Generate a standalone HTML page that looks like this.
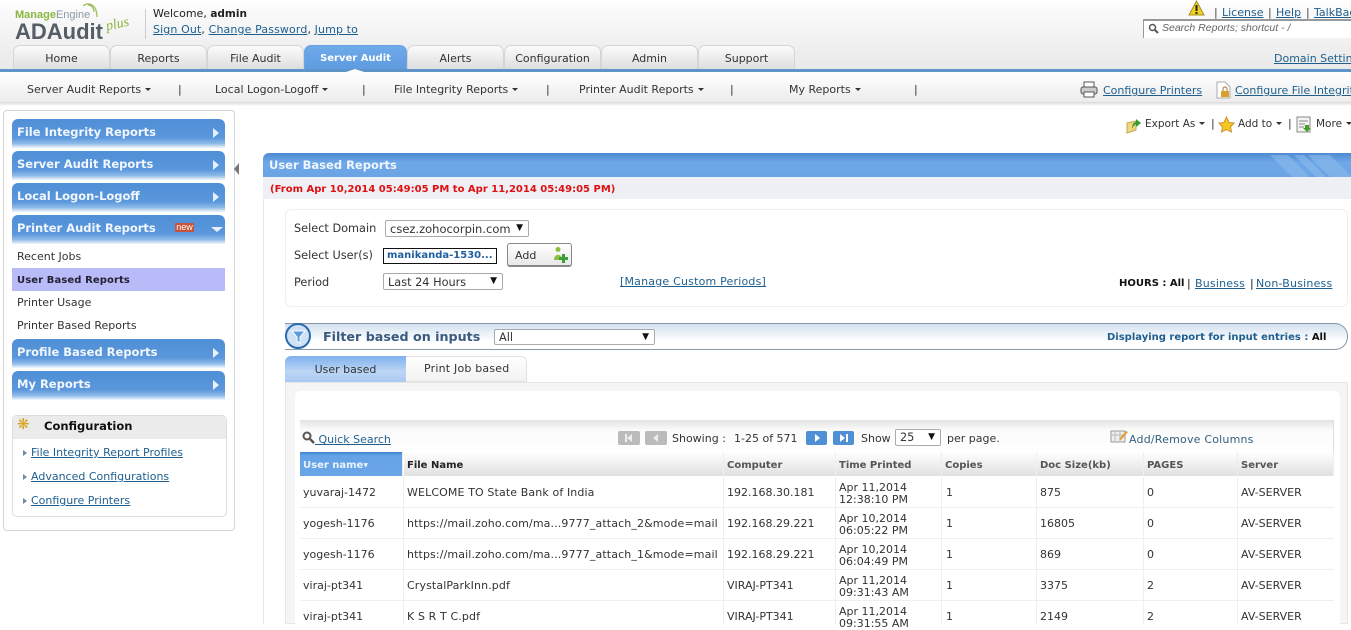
<!DOCTYPE html>
<html><head><meta charset="utf-8"><style>
html,body{margin:0;padding:0;width:1351px;height:624px;overflow:hidden;background:#fff;font-family:"DejaVu Sans",sans-serif;font-size:11px;color:#333}
.a,.t{position:absolute}
.t{white-space:nowrap;line-height:12px}
a{color:#1f5f8f;text-decoration:underline}
.tab{position:absolute;top:45px;height:24px;border:1px solid #d5d5d5;border-bottom:0;border-radius:7px 7px 0 0;box-sizing:border-box;background:linear-gradient(#fbfbfb,#dedede);text-align:center;line-height:25px;color:#333}
.nav{position:absolute;left:12px;width:213px;height:29px;border-radius:6px 6px 0 0;background:linear-gradient(#4f8fd6 0,#5b97dc 65%,#8fbbe9 85%,#f4f8fd 100%);color:#f2f7fd;font-weight:bold;font-size:11.5px;line-height:26px;text-indent:5px}
.nav i{position:absolute;left:201px;top:9px;width:0;height:0;border-left:6px solid #e8f1fb;border-top:5px solid transparent;border-bottom:5px solid transparent}
.sm{position:absolute;left:17px;color:#333}
.th{position:absolute;top:452px;height:24px;background:linear-gradient(#fff,#e0e0e0);font-weight:bold;font-size:10px;color:#555;line-height:28px;text-indent:3px;border-right:1px solid #eee;box-sizing:border-box}
.sep{position:absolute;top:477px;height:147px;width:1px;background:#edf0f3}
.h{position:absolute;left:300px;width:1034px;height:1px;background:#edf0f3}
.sel{position:absolute;border:1px solid #aaa;border-radius:2px;box-sizing:border-box;background:#fff;color:#333;font-size:11.3px;line-height:17px;padding-left:4px}
.sel b{position:absolute;right:5px;top:0;font-size:9px;line-height:15px;color:#111;font-weight:normal}
.btn{position:absolute;top:431px;width:22px;height:14px;border-radius:2px}
.car:after{content:"";display:inline-block;margin-left:4px;border-top:3px solid #333;border-left:3px solid transparent;border-right:3px solid transparent;vertical-align:2px}
.r{letter-spacing:.12px}
.bb{font-weight:bold;font-size:10px}
</style></head><body>
<!-- header -->
<div class="a" style="left:0;top:0;width:1351px;height:69px;background:linear-gradient(#fff,#fafafa 15%,#e9e9e9)"></div>
<div class="t" style="left:15px;top:8px;font:bold 11px/14px 'Liberation Sans',sans-serif;color:#8ab53f">Manage<span style="font-weight:normal;color:#8a9aa5">Engine</span></div>
<svg class="a" style="left:80px;top:1px" width="22" height="20"><path d="M3 5C9 0 17 4 17 16M8 4C12 4 14 8 14 11" fill="none" stroke="#9cc15c" stroke-width="1.3"/></svg>
<div class="t" style="left:15px;top:21px;font:bold 22px/22px 'Liberation Sans',sans-serif;color:#555e66">ADAudit</div>
<div class="t" style="left:106px;top:18px;font:italic 14px/14px 'Liberation Serif',serif;color:#8ab53f;transform:rotate(-12deg)">plus</div>
<div class="a" style="left:145px;top:9px;width:1px;height:30px;background:#ccc"></div>
<div class="t" style="left:153px;top:8px;color:#222">Welcome, <b style="font-size:10.500px">admin</b></div>
<div class="t r" style="left:153px;top:24px"><a>Sign Out</a>, <a>Change Password</a>, <a>Jump to</a></div>
<svg class="a" style="left:1188px;top:0" width="18" height="16"><path d="M8.500 1L16 15H1Z" fill="#f0d020" stroke="#a89020"/><rect x="7.500" y="5" width="2" height="6" fill="#222"/><rect x="7.500" y="12" width="2" height="2" fill="#222"/></svg>
<div class="t" style="left:1214px;top:7px;color:#444">|</div>
<div class="t" style="left:1222px;top:7px"><a>License</a></div>
<div class="t" style="left:1268px;top:7px;color:#444">|</div>
<div class="t" style="left:1276px;top:7px"><a>Help</a></div>
<div class="t" style="left:1306px;top:7px;color:#444">|</div>
<div class="t" style="left:1314px;top:7px"><a>TalkBack</a></div>
<div class="a" style="left:1143px;top:19px;width:208px;height:19px;background:#fff;border-top:2px solid #999;border-left:1px solid #999;box-sizing:border-box"></div>
<svg class="a" style="left:1148px;top:23px" width="11" height="11"><circle cx="4.500" cy="4.500" r="3" fill="none" stroke="#555" stroke-width="1.500"/><path d="M7 7l3 3" stroke="#555" stroke-width="2"/></svg>
<div class="t" style="left:1162px;top:22px;font:italic 10.500px/12px 'Liberation Sans',sans-serif;color:#666">Search Reports; shortcut - /</div>
<div class="t" style="left:1274px;top:53px"><a>Domain Settings</a></div>
<!-- tabs -->
<div class="tab" style="left:13px;width:97px">Home</div>
<div class="tab" style="left:110px;width:97px">Reports</div>
<div class="tab" style="left:207px;width:97px">File Audit</div>
<div class="tab" style="left:304px;width:103px;background:linear-gradient(#6faaea,#5e9be0);border-color:#6ba3e3;color:#fff;font-weight:bold;font-size:10px;line-height:26px">Server Audit</div>
<div class="tab" style="left:407px;width:97px">Alerts</div>
<div class="tab" style="left:504px;width:97px">Configuration</div>
<div class="tab" style="left:601px;width:97px">Admin</div>
<div class="tab" style="left:698px;width:97px">Support</div>
<div class="a" style="left:0;top:69px;width:1351px;height:3px;background:#5f94c8"></div>
<div class="a" style="left:346px;top:69px;border-bottom:3px solid #fff;border-left:9px solid transparent;border-right:9px solid transparent"></div>
<!-- subnav -->
<div class="a" style="left:0;top:72px;width:1351px;height:30px;background:linear-gradient(#fff,#ececec)"></div>
<div class="a" style="left:0;top:102px;width:1351px;height:4px;background:linear-gradient(#d8d8d8,#fff)"></div>
<div class="t car" style="left:27px;top:84px">Server Audit Reports</div>
<div class="t" style="left:178px;top:84px">|</div>
<div class="t car" style="left:215px;top:84px">Local Logon-Logoff</div>
<div class="t" style="left:362px;top:84px">|</div>
<div class="t car" style="left:394px;top:84px">File Integrity Reports</div>
<div class="t" style="left:546px;top:84px">|</div>
<div class="t car" style="left:579px;top:84px">Printer Audit Reports</div>
<div class="t" style="left:730px;top:84px">|</div>
<div class="t car" style="left:789px;top:84px">My Reports</div>
<div class="t" style="left:914px;top:84px">|</div>
<svg class="a" style="left:1080px;top:81px" width="18" height="18"><rect x="4" y="1" width="10" height="5" fill="#fff" stroke="#555"/><rect x="1" y="6" width="16" height="7" rx="2" fill="#ccc" stroke="#555"/><rect x="4" y="11" width="10" height="5" fill="#fff" stroke="#555"/></svg>
<div class="t" style="left:1103px;top:85px"><a>Configure Printers</a></div>
<svg class="a" style="left:1215px;top:81px" width="17" height="18"><path d="M2 1H10L15 6V17H2Z" fill="#fff" stroke="#aaa"/><rect x="6" y="10" width="8" height="6" fill="#d9a030"/><path d="M8 10V8a2 2 0 0 1 4 0v2" fill="none" stroke="#a07020"/></svg>
<div class="t" style="left:1235px;top:85px"><a>Configure File Integrity</a></div>
<!-- actions -->
<svg class="a" style="left:1126px;top:116px" width="16" height="18"><path d="M1 7L10 5V14L1 17Z" fill="#f0d880" stroke="#c0a850"/><path d="M6 13C6 8 8 6 10 6V3L15 7L10 11V8C8 9 7 11 6 13Z" fill="#3a9a2a"/></svg>
<div class="t car" style="left:1145px;top:118px;font-size:10.500px">Export As</div>
<div class="t" style="left:1211px;top:118px">|</div>
<svg class="a" style="left:1218px;top:116px" width="17" height="17"><path d="M8.500 1L11 6.500L16 7L12.500 11L13.500 16L8.500 13.500L3.500 16L4.500 11L1 7L6 6.500Z" fill="#f5c820" stroke="#d09030"/></svg>
<div class="t car" style="left:1238px;top:118px;font-size:10.500px">Add to</div>
<div class="t" style="left:1288px;top:118px">|</div>
<svg class="a" style="left:1296px;top:116px" width="16" height="18"><rect x="1" y="1" width="13" height="15" fill="#f4f4f0" stroke="#888"/><path d="M3 5h9M3 8h6M3 11h5" stroke="#888"/><path d="M9 9h4v3h2l-4 4-4-4h2z" fill="#4a9a30"/></svg>
<div class="t car" style="left:1316px;top:118px;font-size:10.500px">More</div>
<!-- sidebar -->
<div class="a" style="left:3px;top:110px;width:232px;height:421px;border:1px solid #d5d5d5;border-radius:4px;box-sizing:border-box"></div>
<div class="a" style="left:234px;top:163px;border-right:5px solid #777;border-top:6px solid transparent;border-bottom:6px solid transparent"></div>
<div class="nav" style="top:119px">File Integrity Reports<i></i></div>
<div class="nav" style="top:151px">Server Audit Reports<i></i></div>
<div class="nav" style="top:183px">Local Logon-Logoff<i></i></div>
<div class="nav" style="top:215px">Printer Audit Reports<i style="left:199px;top:12px;border-top:5px solid #e8f1fb;border-left:6px solid transparent;border-right:6px solid transparent;border-bottom:0"></i></div>
<div class="a" style="left:175px;top:223px;width:19px;height:9px;background:#c8523a;color:#fff;font:9px/8px 'Liberation Sans',sans-serif;text-align:center">new</div>
<div class="t sm" style="top:251px">Recent Jobs</div>
<div class="a" style="left:12px;top:268px;width:213px;height:23px;background:#b9bbf8"></div>
<div class="t sm bb" style="top:275px;color:#223;letter-spacing:.1px">User Based Reports</div>
<div class="t sm" style="top:297px">Printer Usage</div>
<div class="t sm" style="top:320px">Printer Based Reports</div>
<div class="nav" style="top:339px">Profile Based Reports<i></i></div>
<div class="nav" style="top:371px">My Reports<i></i></div>
<div class="a" style="left:12px;top:415px;width:215px;height:102px;border:1px solid #ddd;border-radius:5px;box-sizing:border-box"></div>
<div class="a" style="left:13px;top:416px;width:213px;height:23px;background:#ebebeb;border-radius:5px 5px 0 0"></div>
<div class="t" style="left:17px;top:418px;font-size:15px;color:#d8a020">&#10059;</div>
<div class="t" style="left:44px;top:420px;font-weight:bold;font-size:11.500px;color:#111">Configuration</div>
<div class="a" style="left:23px;top:450px;border-left:4px solid #6b8aa5;border-top:3px solid transparent;border-bottom:3px solid transparent"></div>
<div class="t" style="left:31px;top:447px"><a>File Integrity Report Profiles</a></div>
<div class="a" style="left:23px;top:474px;border-left:4px solid #6b8aa5;border-top:3px solid transparent;border-bottom:3px solid transparent"></div>
<div class="t" style="left:31px;top:471px"><a>Advanced Configurations</a></div>
<div class="a" style="left:23px;top:498px;border-left:4px solid #6b8aa5;border-top:3px solid transparent;border-bottom:3px solid transparent"></div>
<div class="t" style="left:31px;top:495px"><a>Configure Printers</a></div>
<!-- main header -->
<div class="a" style="left:263px;top:153px;width:1088px;height:24px;border-radius:6px 0 0 0;background:linear-gradient(#4d8ad0,#6fa8e8 40%,#6aa4e4)"></div>
<svg class="a" style="left:1270px;top:155px" width="81" height="22"><path d="M0 0H18L40 22H22ZM24 0H34L56 22H46ZM38 0H60L81 21V22H60Z" fill="#8fbcec" opacity=".55"/></svg>
<div class="t" style="left:269px;top:159px;color:#f0f6fd;font-weight:bold;font-size:11.500px">User Based Reports</div>
<div class="a" style="left:263px;top:177px;width:1088px;height:22px;background:#eef0f6"></div>
<div class="t bb" style="left:270px;top:184px;color:#e01010">(From Apr 10,2014 05:49:05 PM to Apr 11,2014 05:49:05 PM)</div>
<div class="a" style="left:263px;top:199px;width:1px;height:425px;background:#e4e6ea"></div>
<!-- form -->
<div class="a" style="left:285px;top:209px;width:1063px;height:98px;border:1px solid #eee;border-radius:6px;box-sizing:border-box"></div>
<div class="t" style="left:294px;top:223px;font-size:11.300px">Select Domain</div>
<div class="sel" style="left:385px;top:220px;width:144px;height:17px;font-size:11.500px">csez.zohocorpin.com<b>&#9660;</b></div>
<div class="t" style="left:294px;top:250px;font-size:11.300px">Select User(s)</div>
<div class="a bb" style="left:383px;top:248px;width:114px;height:16px;border:1px solid #111;box-sizing:border-box;color:#1f5f9f;line-height:14px;padding-left:3px;white-space:nowrap;overflow:hidden">manikanda-1530...</div>
<div class="a" style="left:507px;top:243px;width:65px;height:24px;border:1px solid #888;border-radius:3px;box-sizing:border-box;background:linear-gradient(#fff,#e8e8e8);border-bottom-width:2px;line-height:23px;padding-left:7px">Add</div>
<svg class="a" style="left:551px;top:246px" width="17" height="18"><circle cx="7" cy="3.500" r="2.500" fill="#8fbf40"/><path d="M3 14C3 7 11 7 11 14Z" fill="#8fbf40"/><path d="M8 11h3V8h3v3h3v3h-3v3h-3v-3H8Z" fill="#3aa03a"/></svg>
<div class="t" style="left:294px;top:277px;font-size:11.300px">Period</div>
<div class="sel" style="left:383px;top:273px;width:120px;height:17px">Last 24 Hours<b>&#9660;</b></div>
<div class="t" style="left:620px;top:276px;letter-spacing:.2px"><a>[Manage Custom Periods]</a></div>
<div class="t bb" style="left:1119px;top:278px;color:#111">HOURS : All</div>
<div class="t" style="left:1187px;top:278px;color:#111">|</div>
<div class="t" style="left:1195px;top:278px;letter-spacing:.2px"><a>Business </a></div>
<div class="t" style="left:1250px;top:278px;color:#111">|</div>
<div class="t" style="left:1256px;top:278px;letter-spacing:.2px"><a>Non-Business </a></div>
<!-- filter -->
<div class="a" style="left:285px;top:323px;width:1063px;height:27px;border:1px solid #8899a8;border-left:0;border-radius:0 13px 13px 0;box-sizing:border-box;background:linear-gradient(#d3e1ef,#fff 70%)"></div>
<div class="a" style="left:285px;top:323px;width:26px;height:26px;border-radius:50%;box-sizing:border-box;border:2px solid #2a6ab0;background:#cfe2f5"></div>
<svg class="a" style="left:291px;top:329px" width="15" height="15"><path d="M1 2H14L9 8V14L6 12V8Z" fill="#5a9ae0" stroke="#fff"/></svg>
<div class="t" style="left:323px;top:329px;font-weight:bold;font-size:12.700px;line-height:15px;color:#3a5a80">Filter based on inputs</div>
<div class="sel" style="left:494px;top:329px;width:161px;height:16px;line-height:15px">All<b>&#9660;</b></div>
<div class="t bb" style="left:1107px;top:332px;color:#1f5f8f">Displaying report for input entries : <span style="color:#111">All</span></div>
<!-- inner tabs -->
<div class="a" style="left:285px;top:356px;width:242px;height:26px;border:1px solid #e2e2e2;border-radius:6px 6px 0 0;box-sizing:border-box;background:linear-gradient(#fff,#f2f2f2)"></div>
<div class="a" style="left:285px;top:356px;width:121px;height:26px;border-radius:6px 0 0 0;background:linear-gradient(#7fb0ee,#bcd6f5 60%,#a9c9f0);text-align:center;line-height:28px;color:#333">User based</div>
<div class="t" style="left:424px;top:363px;letter-spacing:.2px">Print Job based</div>
<!-- panel -->
<div class="a" style="left:285px;top:382px;width:1063px;height:242px;background:#f5f5f5;border:1px solid #e6e6e6;box-sizing:border-box"></div>
<div class="a" style="left:295px;top:391px;width:1045px;height:233px;background:#fff;border-radius:6px 6px 0 0"></div>
<div class="a" style="left:300px;top:420px;width:1034px;height:32px;background:linear-gradient(#e2e2e2,#fafafa 30%,#fff);border-right:1px solid #ddd;box-sizing:border-box"></div>
<svg class="a" style="left:302px;top:431px" width="13" height="13"><circle cx="5" cy="5" r="3.500" fill="none" stroke="#555" stroke-width="2"/><path d="M8 8l4 4" stroke="#555" stroke-width="2.500"/></svg>
<div class="t" style="left:315px;top:434px"><a>&nbsp;Quick Search</a></div>
<div class="btn" style="left:618px;background:#bbb"></div>
<svg class="a" style="left:624px;top:434px" width="10" height="8"><path d="M1 0h2v8H1zM8 0v8L3 4z" fill="#eee"/></svg>
<div class="btn" style="left:645px;background:#bbb"></div>
<svg class="a" style="left:652px;top:434px" width="8" height="8"><path d="M6 0v8L1 4z" fill="#eee"/></svg>
<div class="t" style="left:672px;top:433px">Showing :</div>
<div class="t" style="left:734px;top:433px">1-25 of 571</div>
<div class="btn" style="left:806px;width:21px;background:#4f8fd6"></div>
<svg class="a" style="left:813px;top:434px" width="8" height="8"><path d="M2 0v8l5-4z" fill="#fff"/></svg>
<div class="btn" style="left:833px;width:21px;background:#4f8fd6"></div>
<svg class="a" style="left:839px;top:434px" width="10" height="8"><path d="M1 0v8l5-4zM7 0h2v8H7z" fill="#fff"/></svg>
<div class="t" style="left:861px;top:433px">Show</div>
<div class="sel" style="left:895px;top:429px;width:46px;height:17px;line-height:16px">25<b>&#9660;</b></div>
<div class="t" style="left:947px;top:433px">per page.</div>
<svg class="a" style="left:1110px;top:429px" width="19" height="15"><rect x="1" y="2" width="14" height="11" fill="#eee" stroke="#999"/><path d="M5 2v11M10 2v11M1 6h14" stroke="#bbb"/><path d="M9 10L16 2l2 1-7 8Z" fill="#e0a030"/></svg>
<div class="t" style="left:1129px;top:434px;color:#33607f;letter-spacing:.2px">Add/Remove Columns</div>
<!-- table head -->
<div class="th" style="left:300px;width:103px;background:linear-gradient(#3f85cf,#65a2e6 15%,#6aa6e6);color:#eaf3fc">User name<span style="font-size:6px;vertical-align:1px">&#9660;</span></div>
<div class="th" style="left:404px;width:320px;color:#222">File Name</div>
<div class="th" style="left:724px;width:112px">Computer</div>
<div class="th" style="left:836px;width:106px">Time Printed</div>
<div class="th" style="left:942px;width:95px">Copies</div>
<div class="th" style="left:1037px;width:107px">Doc Size(kb)</div>
<div class="th" style="left:1144px;width:94px">PAGES</div>
<div class="th" style="left:1238px;width:96px">Server</div>
<div class="sep" style="left:403px"></div><div class="sep" style="left:723px"></div><div class="sep" style="left:835px"></div><div class="sep" style="left:941px"></div><div class="sep" style="left:1036px"></div><div class="sep" style="left:1143px"></div><div class="sep" style="left:1237px"></div>
<div class="h" style="top:507px"></div><div class="h" style="top:538px"></div><div class="h" style="top:569px"></div><div class="h" style="top:600px"></div>
<!-- rows -->
<div class="t" style="left:303px;top:487px">yuvaraj-1472</div><div class="t r" style="left:407px;top:487px">WELCOME TO State Bank of India</div><div class="t" style="left:727px;top:487px">192.168.30.181</div><div class="t" style="left:839px;top:482px">Apr 11,2014<br>12:38:10 PM</div><div class="t" style="left:946px;top:487px">1</div><div class="t" style="left:1040px;top:487px">875</div><div class="t" style="left:1147px;top:487px">0</div><div class="t" style="left:1241px;top:487px">AV-SERVER</div>
<div class="t" style="left:303px;top:518px">yogesh-1176</div><div class="t r" style="left:407px;top:518px">https://mail.zoho.com/ma...9777_attach_2&amp;mode=mail</div><div class="t" style="left:727px;top:518px">192.168.29.221</div><div class="t" style="left:839px;top:513px">Apr 10,2014<br>06:05:22 PM</div><div class="t" style="left:946px;top:518px">1</div><div class="t" style="left:1040px;top:518px">16805</div><div class="t" style="left:1147px;top:518px">0</div><div class="t" style="left:1241px;top:518px">AV-SERVER</div>
<div class="t" style="left:303px;top:549px">yogesh-1176</div><div class="t r" style="left:407px;top:549px">https://mail.zoho.com/ma...9777_attach_1&amp;mode=mail</div><div class="t" style="left:727px;top:549px">192.168.29.221</div><div class="t" style="left:839px;top:544px">Apr 10,2014<br>06:04:49 PM</div><div class="t" style="left:946px;top:549px">1</div><div class="t" style="left:1040px;top:549px">869</div><div class="t" style="left:1147px;top:549px">0</div><div class="t" style="left:1241px;top:549px">AV-SERVER</div>
<div class="t" style="left:303px;top:580px">viraj-pt341</div><div class="t r" style="left:407px;top:580px">CrystalParkInn.pdf</div><div class="t" style="left:727px;top:580px">VIRAJ-PT341</div><div class="t" style="left:839px;top:575px">Apr 11,2014<br>09:31:43 AM</div><div class="t" style="left:946px;top:580px">1</div><div class="t" style="left:1040px;top:580px">3375</div><div class="t" style="left:1147px;top:580px">2</div><div class="t" style="left:1241px;top:580px">AV-SERVER</div>
<div class="t" style="left:303px;top:611px">viraj-pt341</div><div class="t r" style="left:407px;top:611px">K S R T C.pdf</div><div class="t" style="left:727px;top:611px">VIRAJ-PT341</div><div class="t" style="left:839px;top:606px">Apr 11,2014<br>09:31:55 AM</div><div class="t" style="left:946px;top:611px">1</div><div class="t" style="left:1040px;top:611px">2149</div><div class="t" style="left:1147px;top:611px">2</div><div class="t" style="left:1241px;top:611px">AV-SERVER</div>
</body></html>
